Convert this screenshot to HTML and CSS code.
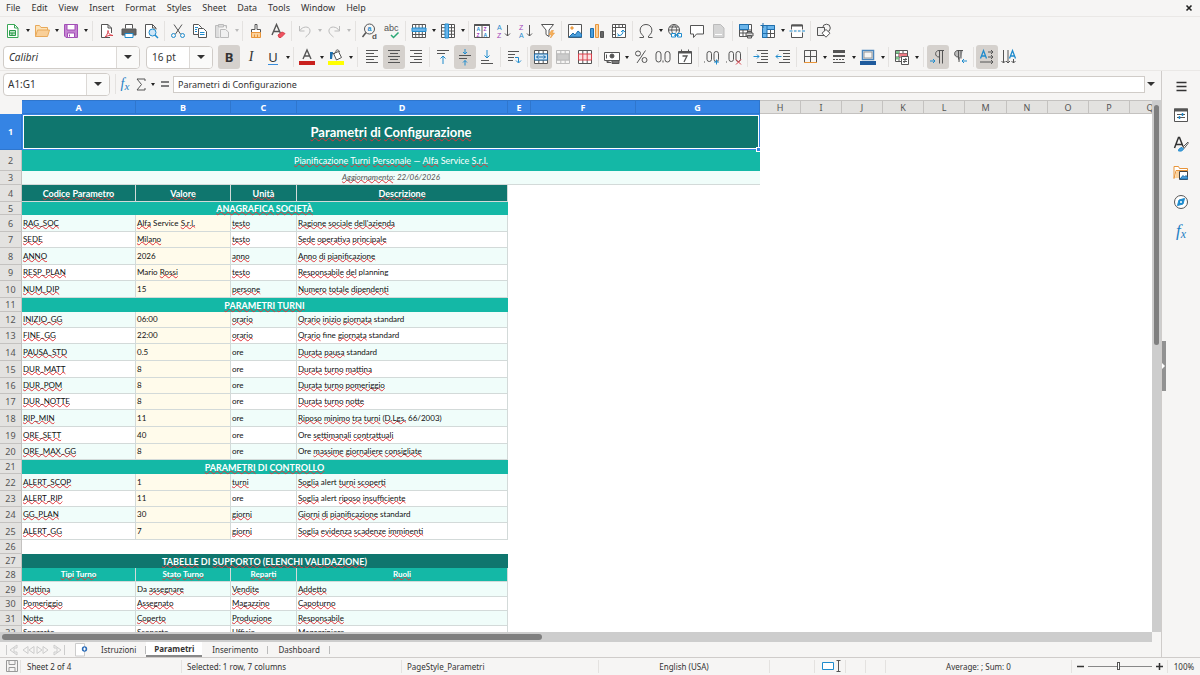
FILE: index.html
```html
<!DOCTYPE html>
<html lang="it">
<head>
<meta charset="utf-8">
<title>Parametri di Configurazione</title>
<link rel="stylesheet" href="styles.css">
</head>
<body>
<nav class="menubar">
<button>File</button><button>Edit</button><button>View</button><button>Insert</button><button>Format</button><button>Styles</button><button>Sheet</button><button>Data</button><button>Tools</button><button>Window</button><button>Help</button>
<button class="close" aria-label="Close document"><svg width="6" height="6" viewBox="0 0 6 6"><path d="M.5.5l5 5M5.500.500l-5 5" stroke="#222" stroke-width="1.600"/></svg></button>
</nav>

<div class="toolbar standard">
<button class="t" aria-label="New"><svg viewBox="0 0 16 16"><path d="M2.500 1.500h7l3.500 3.500v9.500h-10.500z" fill="#fff" stroke="#3aa757"/><path d="M9.500 1.500v3.500h3.500" stroke="#3aa757"/><path d="M4.500 7.500h6v5h-6zM4.500 10h6M7 10v2.500" stroke="#2c9a4b" fill="#bfe5c8"/></svg></button><button class="dd" aria-label="New options"></button>
<button class="t" aria-label="Open"><svg viewBox="0 0 16 16"><path d="M1.500 13.500v-11h4l1.500 2h6.500v3" fill="#fde3b8" stroke="#e8a95a"/><path d="M1.500 13.500l2-6.500h12l-2 6.500z" fill="#f9cf98" stroke="#e8a95a"/></svg></button><button class="dd" aria-label="Open options"></button>
<button class="t" aria-label="Save"><svg viewBox="0 0 16 16"><path d="M1.500 1.500h13v13h-11.500l-1.500-1.500z" fill="#c583d2" stroke="#a24fb6"/><path d="M4 1.500h8v5.500h-8zM4.500 10h7v4.500h-7z" fill="#fff" stroke="#a24fb6"/><path d="M6.500 11.500v2" stroke="#9a3fb0"/></svg></button><button class="dd" aria-label="Save options"></button>
<span class="sep wide"></span>
<button class="t" aria-label="Export as PDF"><svg viewBox="0 0 16 16"><path d="M11 14.500h-8.500v-13h6.500l3.500 3.500v5M9 1.500v3.500h3.500" fill="#fff"/><path d="M6 14c2-2 3-4 3-6.500 0 3 2 5 5 5-3-.5-5 0-8 1.500z" stroke="#d9404c"/></svg></button>
<button class="t" aria-label="Print"><svg viewBox="0 0 16 16"><path d="M4.500 5.500v-4h7v4" fill="#fff"/><path d="M1 6h14v6h-14z" fill="#666"/><path d="M4 10.500h8v4h-8z" fill="#fff" stroke="#1e8bcd"/></svg></button>
<button class="t" aria-label="Print preview"><svg viewBox="0 0 16 16"><path d="M7 14.500h-4.500v-13h7l3.500 3.500v1.500M9.500 1.500v3.500h3.500" fill="#fff"/><circle cx="9.500" cy="9.500" r="3.500" fill="#cfe6f7" stroke="#1e8bcd"/><path d="M12 12l3 3" stroke="#1e8bcd" stroke-width="1.500"/></svg></button>
<span class="sep"></span>
<button class="t" aria-label="Cut"><svg viewBox="0 0 16 16"><path d="M4 1.500l6.500 9.500M12 1.500l-6.500 9.500"/><circle cx="3.500" cy="12.500" r="2" stroke="#1e8bcd"/><circle cx="12.500" cy="12.500" r="2" stroke="#1e8bcd"/></svg></button>
<button class="t" aria-label="Copy"><svg viewBox="0 0 16 16"><path d="M1.500 1.500h5l3 3v7h-8z" fill="#fff"/><path d="M6.500 5.500h5l3 3v6h-8z" fill="#fff"/><path d="M3 4.500h3M3 6.500h2M3 8.500h2M8 9.500h4.500M8 11.500h4.500" stroke="#1e8bcd"/></svg></button>
<button class="t off" aria-label="Paste"><svg viewBox="0 0 16 16"><path d="M5 2.500h-3.500v12h4M10 2.500h2.500v3M4.500 1.500h5v2.500h-5z" fill="#ddd"/><path d="M6.500 6.500h5l3 2.500v5.500h-8z" fill="#f0f0f0"/></svg></button><button class="dd off" aria-label="Paste options"></button>
<span class="sep"></span>
<button class="t" aria-label="Clone formatting"><svg viewBox="0 0 16 16"><path d="M7 1.500h2v5h3.500v3h-9v-3h3.500z" fill="#fff"/><path d="M3.500 9.500h9v5h-9z" fill="#fbd19b" stroke="#e8953a"/><path d="M6.500 11.500v3M9.500 11.500v3" stroke="#e8953a"/></svg></button>
<button class="t" aria-label="Clear formatting"><svg viewBox="0 0 16 16"><path d="M2 12l4.500-10.500 4 9M3.500 8.500h6" stroke-width="1.400"/><path d="M8 12l4-3 3 1.500-4 4h-2z" fill="#ef5360" stroke="#d9404c"/></svg></button>
<span class="sep"></span>
<button class="t off" aria-label="Undo"><svg viewBox="0 0 16 16"><path d="M2.500 3v5h5M3 7.500c2-4 9-5 10-.5.500 3-2 5-4.500 7"/></svg></button><button class="dd off" aria-label="Undo list"></button>
<button class="t off" aria-label="Redo"><svg viewBox="0 0 16 16"><path d="M13.500 3v5h-5M13 7.500c-2-4-9-5-10-.5-.5 3 2 5 4.500 7"/></svg></button><button class="dd off" aria-label="Redo list"></button>
<span class="sep wide"></span>
<button class="t" aria-label="Find and replace"><svg viewBox="0 0 16 16"><circle cx="7.500" cy="6" r="5"/><path d="M4 9.500l-3.500 4.500" stroke-width="1.500"/><text class="blue" x="5.500" y="7.500" font-size="7" font-weight="bold">a</text><text x="10" y="15.500" font-size="8" font-weight="bold">d</text></svg></button>
<button class="t" aria-label="Spelling"><svg viewBox="0 0 16 16"><text x="0" y="8" font-size="9">abc</text><path d="M7 12l2.500 2.500 5-5" stroke="#2aa876" stroke-width="1.500"/></svg></button>
<span class="sep"></span>
<button class="t" aria-label="Row"><svg viewBox="0 0 16 16"><path d="M1.500 1.500h13v13h-13zM1.500 11.500h13M4.700 1.500v13M8 1.500v13M11.300 1.500v13" fill="#fff"/><path d="M1 5h14v3.500h-14z" fill="#69b4ea" stroke="#1e8bcd"/></svg></button><button class="dd" aria-label="Row options"></button>
<button class="t" aria-label="Column"><svg viewBox="0 0 16 16"><path d="M1.500 1.500h13v13h-13zM1.500 4.700h13M1.500 8h13M1.500 11.300h13M11.500 1.500v13" fill="#fff"/><path d="M5 1v14h3.500v-14z" fill="#69b4ea" stroke="#1e8bcd"/></svg></button><button class="dd" aria-label="Column options"></button>
<span class="sep"></span>
<button class="t" aria-label="Sort"><svg viewBox="0 0 16 16"><path d="M.5 1.500h15v13h-15zM8 3v11.500" fill="#fff"/><path d="M.5 2h15" stroke-width="2"/><g font-size="5" font-weight="bold"><text class="blue" x="2.500" y="8">A</text><text class="violet" x="2.500" y="14">Z</text><text class="violet" x="9.500" y="8">Z</text><text class="blue" x="9.500" y="14">A</text></g></svg></button>
<button class="t" aria-label="Sort ascending"><svg viewBox="0 0 16 16"><text class="blue" x="1" y="6.500" font-size="7">A</text><text class="violet" x="1" y="15" font-size="7">Z</text><path d="M11.500 2v11M9 10.500l2.500 2.500 2.500-2.500"/></svg></button>
<button class="t" aria-label="Sort descending"><svg viewBox="0 0 16 16"><text class="violet" x="1" y="6.500" font-size="7">Z</text><text class="blue" x="1" y="15" font-size="7">A</text><path d="M11.500 2v11M9 10.500l2.500 2.500 2.500-2.500"/></svg></button>
<button class="t" aria-label="AutoFilter"><svg viewBox="0 0 16 16"><path d="M1.500 1.500h12l-4.500 5.500v6.500l-3-2v-4.500z" fill="#fff"/><path d="M11.500 7.500l-2.500 4h2.500l-1 3.500 4-5h-2.500l1.500-2.500z" fill="#f7b25c" stroke="#e8953a" stroke-width=".600"/></svg></button>
<span class="sep"></span>
<button class="t" aria-label="Insert image"><svg viewBox="0 0 16 16"><path d="M1.500 1.500h13v13h-13z" fill="#fff"/><circle cx="5" cy="5" r="1.200" fill="#f7b25c" stroke="#e8953a"/><path d="M2 14l4-4 2 2 3-4 3.500 3v3z" fill="#4b9fdc" stroke="#1e6fae"/></svg></button>
<button class="t" aria-label="Insert chart"><svg viewBox="0 0 16 16"><path d="M1.500 5.500h3v9h-3z" fill="#4b9fdc" stroke="#1e6fae"/><path d="M6.500 1.500h3v13h-3z" fill="#fbd19b" stroke="#e8953a"/><path d="M11.500 8.500h3v6h-3z" fill="#666"/></svg></button>
<button class="t" aria-label="Insert pivot table"><svg viewBox="0 0 16 16"><path d="M1.500 1.500h13v13h-13zM1.500 4.500h13M4.500 1.500v13M8 1.500v3M11.500 1.500v3M1.500 8h3M1.500 11.500h3" fill="#fff"/><path d="M6.500 10.500l1.500 2c3 0 4-2 4-5M6.500 13l1.500-.5M10 9l2-2 2 2" stroke="#1e8bcd"/></svg></button>
<span class="sep"></span>
<button class="t" aria-label="Special character"><svg viewBox="0 0 16 16"><path d="M1.500 14.500h4v-1.500c-5.500-3.500-4-11.500 2.500-11.500s8 8 2.500 11.500v1.500h4"/></svg></button><button class="dd" aria-label="Recent characters"></button>
<button class="t" aria-label="Insert hyperlink"><svg viewBox="0 0 16 16"><circle cx="7" cy="7" r="5.500"/><path d="M1.500 7h11M2.500 4h9M7 1.500c-3 3-3 8 0 11M7 1.500c3 3 3 5 2 8"/><path d="M4.500 10.500h4v3.500h-4zM10.500 10.500h4v3.500h-4zM7 12.200h5" fill="#fff" stroke="#1e8bcd"/></svg></button>
<button class="t" aria-label="Insert comment"><svg viewBox="0 0 16 16"><path d="M1.500 2.500h13v8.500h-7l-3 3.500v-3.500h-3z" fill="#fff"/></svg></button>
<button class="t off" aria-label="Headers and footers"><svg viewBox="0 0 16 16"><path d="M2.500 1.500h7l3.500 3.500v9.500h-10.500z" fill="#d5d5d5"/><path d="M4 11.500h7" stroke="#fff"/></svg></button>
<span class="sep"></span>
<button class="t" aria-label="Define print area"><svg viewBox="0 0 16 16"><path d="M1.500 1.500h12v12h-12zM1.500 7h12M1.500 10h12M5 1.500v12M9.500 1.500v12" fill="#fff"/><path d="M1.500 1.500h9v5h-9z" fill="#69b4ea" stroke="#1e6fae"/><path d="M8 10h7v3h-7zM10 8.500h3M9.500 12.500h4v2.500h-4z" fill="#ddd"/></svg></button>
<button class="t" aria-label="Freeze rows and columns"><svg viewBox="0 0 16 16"><path d="M2.500 2.500h12v12h-12zM2.500 10.500h12M10.500 2.500v12" fill="#fff"/><path d="M3 2.500h11.500v4h-7.500v8h-4.500v-9" fill="#69b4ea" stroke="#1e6fae"/><path d="M7 2.500v4M2.500 10.500h4.500M3 0v5M.5 2.500h5" stroke="#1e6fae"/></svg></button><button class="dd" aria-label="Freeze options"></button>
<button class="t" aria-label="Split window"><svg viewBox="0 0 16 16"><path d="M2.500 6.500v-4.500h11v4.500M2.500 9.500v5h11v-5" fill="#fff"/><path d="M2.500 2.500h11" stroke-width="2"/><path d="M.5 8h3M5 8h2.500M9 8h2.500M13 8h3" stroke="#1e8bcd"/></svg></button>
<span class="sep"></span>
<button class="t" aria-label="Show draw functions"><svg viewBox="0 0 16 16"><circle cx="10.500" cy="5" r="3.800"/><path d="M1.500 4.500h7v8h-7z" fill="#f0f0f0"/><path d="M10 6.500l4 3.700-4 4-4-4z" fill="#fff"/></svg></button>
</div>

<div class="toolbar formatting">
<div class="combo font"><input class="italic" aria-label="Font name" value="Calibri"><button aria-label="Font list"></button></div>
<div class="combo size"><input aria-label="Font size" value="16 pt"><button aria-label="Size list"></button></div>
<button class="t on bold" aria-label="Bold">B</button>
<button class="t serif" aria-label="Italic">I</button>
<button class="t" aria-label="Underline"><span class="uline">U</span></button><button class="dd" aria-label="Underline options"></button>
<span class="sep"></span>
<button class="t" aria-label="Font color"><svg viewBox="0 0 16 16"><path d="M4 10l4-9 4 9M5.500 7h5" stroke-width="1.400"/><path d="M0 12h16v4h-16z" fill="#c9211e" stroke="none"/></svg></button><button class="dd" aria-label="Font colors"></button>
<button class="t" aria-label="Background color"><svg viewBox="0 0 16 16"><path d="M5.500 4.500l5-2 3 6-5 2.500z" fill="#fff"/><path d="M8 4c-1-4 3-4 3.500-1M3 4.500h4" /><path d="M2 3h3l-1 7h-2z" fill="#1e6fae" stroke="none"/><path d="M0 12h16v4h-16z" fill="#ff0" stroke="none"/></svg></button><button class="dd" aria-label="Background colors"></button>
<span class="sep wide"></span>
<button class="t" aria-label="Align left"><svg viewBox="0 0 16 16"><path d="M2 1.500h12M2 4.500h8M2 7.500h12M2 10.500h8M2 13.500h12"/></svg></button>
<button class="t on" aria-label="Align center"><svg viewBox="0 0 16 16"><path d="M2 1.500h12M4 4.500h8M2 7.500h12M4 10.500h8M2 13.500h12"/></svg></button>
<button class="t" aria-label="Align right"><svg viewBox="0 0 16 16"><path d="M2 1.500h12M6 4.500h8M2 7.500h12M6 10.500h8M2 13.500h12"/></svg></button>
<span class="sep"></span>
<button class="t" aria-label="Align top"><svg viewBox="0 0 16 16"><path d="M2 1.500h12M2 4.500h8"/><path d="M8 15v-8M5.500 9.500l2.500-2.500 2.500 2.500" stroke="#1e8bcd"/></svg></button>
<button class="t on" aria-label="Center vertically"><svg viewBox="0 0 16 16"><path d="M2 6.500h12M2 9.500h8"/><path d="M8 0v5M6 3l2 2 2-2M8 16.500v-5M6 13.500l2-2 2 2" stroke="#1e8bcd"/></svg></button>
<button class="t" aria-label="Align bottom"><svg viewBox="0 0 16 16"><path d="M2 11.500h8M2 14.500h12"/><path d="M8 1v8M5.500 6.500l2.500 2.500 2.500-2.500" stroke="#1e8bcd"/></svg></button>
<span class="sep"></span>
<button class="t" aria-label="Wrap text"><svg viewBox="0 0 16 16"><path d="M2 2.500h11M2 5.500h7M2 8.500h6M2 11.500h5"/><path d="M9 8.500h3.500v5M10 11.500l2.500 2.500 2.500-2.500" stroke="#1e8bcd"/></svg></button>
<span class="sep"></span>
<button class="t on" aria-label="Merge and center"><svg viewBox="0 0 16 16"><path d="M1.500 1.500h13v13h-13zM1.500 5h13M1.500 11h13M5.800 1.500v3.500M10.200 1.500v3.500M5.800 11v3.500M10.200 11v3.500" fill="#fff"/><path d="M1.500 5h13v6h-13zM3.500 8h9M5.500 6.500l-2 1.500 2 1.500M10.500 6.500l2 1.500-2 1.500" fill="#cfe6f7" stroke="#1e6fae"/></svg></button>
<button class="t off" aria-label="Merge cells"><svg viewBox="0 0 16 16"><path d="M1.500 1.500h13v13h-13zM1.500 5h13M1.500 11h13M5.800 1.500v3.500M10.200 1.500v3.500M5.800 11v3.500M10.200 11v3.500"/><path d="M2 5h12v6h-12z" fill="#ccc"/></svg></button>
<button class="t" aria-label="Unmerge cells"><svg viewBox="0 0 16 16"><path d="M1.500 1.500h13v13h-13zM5.800 1.500v13M10.200 1.500v13" fill="#fff"/><path d="M1.500 5h13v6h-13zM5.800 5v6M10.200 5v6" fill="#fbe0e2" stroke="#d9404c"/></svg></button>
<span class="sep"></span>
<button class="t" aria-label="Format as currency"><svg viewBox="0 0 16 16"><path d="M.5 3.500h15v8h-15z" fill="#fff"/><circle cx="8" cy="7" r="2" fill="#555"/><path d="M2.500 5.500v4M8 11.500h7v3h-7zM3 11.500v2h4" fill="#777"/></svg></button><button class="dd" aria-label="Currency list"></button>
<button class="t" aria-label="Format as percent"><svg viewBox="0 0 16 16"><circle cx="5" cy="4.500" r="2.500"/><circle cx="11.500" cy="11" r="2.500"/><path d="M12.500 1.500l-8.500 12.500"/></svg></button>
<button class="t" aria-label="Format as number"><svg viewBox="0 0 16 16"><rect x="1" y="2.500" width="5" height="10.500" rx="2.500"/><rect x="10" y="2.500" width="5" height="10.500" rx="2.500"/><path d="M8 11.500v2"/></svg></button>
<button class="t" aria-label="Format as date"><svg viewBox="0 0 16 16"><path d="M1.500 2.500h13v12h-13zM4.500.500v3M11.500.500v3" fill="#fff"/><path d="M1.500 3.500h13" stroke-width="2"/><path d="M5.500 7h4.500l-3 6" stroke-width="1.300"/></svg></button>
<span class="sep"></span>
<button class="t" aria-label="Add decimal place"><svg viewBox="0 0 16 16"><path d="M.5 12.500v1"/><rect x="3" y="2.500" width="4.500" height="10" rx="2.200"/><rect x="10" y="2.500" width="4.500" height="10" rx="2.200"/><path d="M12.500 10.500v5M10 13h5" stroke="#1e8bcd"/></svg></button>
<button class="t" aria-label="Delete decimal place"><svg viewBox="0 0 16 16"><path d="M.5 12.500v1"/><rect x="3" y="2.500" width="4.500" height="10" rx="2.200"/><rect x="10" y="2.500" width="4.500" height="10" rx="2.200"/><path d="M10 10.500l5 5M15 10.500l-5 5" stroke="#d9404c"/></svg></button>
<span class="sep"></span>
<button class="t" aria-label="Increase indent"><svg viewBox="0 0 16 16"><path d="M4 1.500h11M8 4.500h7M8 7.500h7M8 10.500h7M4 13.500h11"/><path d="M.5 7.500h5.500M4 5.500l2 2-2 2" stroke="#1e8bcd"/></svg></button>
<button class="t" aria-label="Decrease indent"><svg viewBox="0 0 16 16"><path d="M4 1.500h11M8 4.500h7M8 7.500h7M8 10.500h7M4 13.500h11"/><path d="M1 7.500h5.500M3 5.500l-2 2 2 2" stroke="#1e8bcd"/></svg></button>
<span class="sep"></span>
<button class="t" aria-label="Borders"><svg viewBox="0 0 16 16"><path d="M2.500 1.500v12M14.500 1.500v12M2.500 1.500h12M8.500 1.500v12M2.500 7.500h12" fill="#fff"/><path d="M2 13.500h13" stroke="#e8953a"/></svg></button><button class="dd" aria-label="Border list"></button>
<button class="t" aria-label="Border style"><svg viewBox="0 0 16 16"><path d="M2 2.500h12" stroke-width="3"/><path d="M2 7h12" stroke-width="2"/><path d="M2 10.500h12" stroke-dasharray="2 1"/><path d="M2 13.500h12"/></svg></button><button class="dd" aria-label="Border styles"></button>
<button class="t" aria-label="Border color"><svg viewBox="0 0 16 16"><path d="M2.500 1.500h11v9h-11z" fill="#f6f5f4" stroke="#4b86bd" stroke-width="1.500"/><path d="M4 3h8v6h-8z" stroke="#999"/><path d="M0 12h16v4h-16z" fill="#1e5a9c" stroke="none"/></svg></button><button class="dd" aria-label="Border colors"></button>
<span class="sep"></span>
<button class="t" aria-label="Conditional formatting"><svg viewBox="0 0 16 16"><path d="M1.500 1.500h12v11h-12zM1.500 4.500h12M1.500 8h12M5 1.500v11M9 1.500v11" fill="#fff"/><path d="M2 2h3v2.500h-3zM2 8h3v2.500h-3z" fill="#7cc48c" stroke="none"/><path d="M5 4.500h8v3h-8z" fill="#ef7b85" stroke="none"/><path d="M7.500 7.500h7v8h-7zM9 10.500h4M9 12.500h4M12 9l-2 5" fill="#fff"/></svg></button><button class="dd" aria-label="Conditional list"></button>
<span class="sep wide"></span>
<button class="t on" aria-label="Left to right"><svg viewBox="0 0 16 16"><path d="M14 1.500h-5c-4.500 0-4.500 6.500 0 6.500M9.500 1.500v13M12.500 1.500v13"/><path d="M0 12h5M3 10l2 2-2 2" stroke="#1e8bcd"/></svg></button>
<button class="t" aria-label="Right to left"><svg viewBox="0 0 16 16"><path d="M11 1.500h-5c-4.500 0-4.500 6.500 0 6.500h1v5M6.500 1.500v9M9 1.500v8" fill="#bbb"/><path d="M15 12h-5M12 10l-2 2 2 2" stroke="#1e8bcd"/></svg></button>
<span class="sep"></span>
<button class="t on" aria-label="Text direction left to right"><svg viewBox="0 0 16 16"><path d="M1.500 9.500l3-8 3 8M2.500 7h4" stroke="#1e8bcd" stroke-width="1.300"/><path d="M9 3h5M12 1l2 2-2 2M9 8h5M12 6l2 2-2 2M1 13h13M12 11l2 2-2 2"/></svg></button>
<button class="t" aria-label="Text direction top to bottom"><svg viewBox="0 0 16 16"><path d="M8.500 9.500l3-8 3 8M9.500 7h4" stroke="#1e8bcd" stroke-width="1.300"/><path d="M2.500 1v13M.5 12l2 2 2-2M7 1v13M5 12l2 2 2-2M12.500 10v4M10.500 12l2 2 2-2"/></svg></button>
</div>

<div class="main">
<div class="work">
<div class="formulabar">
<div class="combo name"><input aria-label="Name box" value="A1:G1"><button aria-label="Named ranges"></button></div>
<span class="sep"></span>
<button class="fx" aria-label="Function wizard">f<sub>x</sub></button>
<button class="sigma" aria-label="Select function"><svg width="10" height="13" viewBox="0 0 10 13"><path d="M9 3v-2H1l4.500 5.500L1 12h8v-2" stroke="#555"/></svg></button><button class="dd" aria-label="Function list"></button>
<button class="equals" aria-label="Formula"><svg width="8" height="6" viewBox="0 0 8 6"><path d="M0 1h8M0 5h8" stroke="#555" stroke-width="1.600"/></svg></button>
<input class="formula" aria-label="Input line" value="Parametri di Configurazione">
<button class="expand" aria-label="Expand formula bar"></button>
</div>
<div class="sheetwrap">
<div class="sheet">
<table>
<colgroup><col class="c0"><col class="cA"><col class="cB"><col class="cC"><col class="cD"><col class="cE"><col class="cF"><col class="cG"><col class="cs"><col class="cs"><col class="cs"><col class="cs"><col class="cs"><col class="cw"><col class="cs"><col class="cs"><col class="cs"><col class="cs"></colgroup>
<thead><tr class="h14"><th class="corner"></th><th class="sel">A</th><th class="sel">B</th><th class="sel">C</th><th class="sel">D</th><th class="sel">E</th><th class="sel">F</th><th class="sel">G</th><th>H</th><th>I</th><th>J</th><th>K</th><th>L</th><th>M</th><th>N</th><th>O</th><th>P</th><th>Q</th></tr></thead>
<tbody>
<tr class="h36"><th class="sel">1</th><td class="title" colspan="7"><i>Parametri</i> <i>di</i> <i>Configurazione</i><span class="handle"></span></td></tr>
<tr class="h21"><th>2</th><td class="subtitle" colspan="7"><i>Pianificazione</i> <i>Turni</i> <i>Personale</i> — <i>Alfa</i> Service <i>S.r.l.</i></td></tr>
<tr class="h14"><th>3</th><td class="updated" colspan="7"><i>Aggiornamento</i>: 22/06/2026</td></tr>
<tr class="h17 head"><th>4</th><td><i>Codice</i> <i>Parametro</i></td><td><i>Valore</i></td><td><i>Unità</i></td><td><i>Descrizione</i></td></tr>
<tr class="h13 band"><th>5</th><td colspan="4"><i>ANAGRAFICA</i> <i>SOCIETÀ</i></td></tr>
<tr class="h17 p tint"><th>6</th><td><i>RAG_SOC</i></td><td><i>Alfa</i> Service <i>S.r.l.</i></td><td><i>testo</i></td><td><i>Ragione</i> <i>sociale</i> <i>dell'azienda</i></td></tr>
<tr class="h16 p"><th>7</th><td><i>SEDE</i></td><td><i>Milano</i></td><td><i>testo</i></td><td><i>Sede</i> <i>operativa</i> <i>principale</i></td></tr>
<tr class="h17 p tint"><th>8</th><td><i>ANNO</i></td><td>2026</td><td><i>anno</i></td><td><i>Anno</i> <i>di</i> <i>pianificazione</i></td></tr>
<tr class="h16 p"><th>9</th><td><i>RESP_PLAN</i></td><td>Mario <i>Rossi</i></td><td><i>testo</i></td><td><i>Responsabile</i> <i>del</i> planning</td></tr>
<tr class="h17 p tint"><th>10</th><td><i>NUM_DIP</i></td><td>15</td><td><i>persone</i></td><td><i>Numero</i> <i>totale</i> <i>dipendenti</i></td></tr>
<tr class="h14 band"><th>11</th><td colspan="4"><i>PARAMETRI</i> <i>TURNI</i></td></tr>
<tr class="h16 p tint"><th>12</th><td><i>INIZIO_GG</i></td><td>06:00</td><td><i>orario</i></td><td><i>Orario</i> <i>inizio</i> <i>giornata</i> standard</td></tr>
<tr class="h16 p"><th>13</th><td><i>FINE_GG</i></td><td>22:00</td><td><i>orario</i></td><td><i>Orario</i> fine <i>giornata</i> standard</td></tr>
<tr class="h17 p tint"><th>14</th><td><i>PAUSA_STD</i></td><td>0.5</td><td>ore</td><td><i>Durata</i> <i>pausa</i> standard</td></tr>
<tr class="h17 p"><th>15</th><td><i>DUR_MATT</i></td><td>8</td><td>ore</td><td><i>Durata</i> <i>turno</i> <i>mattina</i></td></tr>
<tr class="h16 p tint"><th>16</th><td><i>DUR_POM</i></td><td>8</td><td>ore</td><td><i>Durata</i> <i>turno</i> <i>pomeriggio</i></td></tr>
<tr class="h16 p"><th>17</th><td><i>DUR_NOTTE</i></td><td>8</td><td>ore</td><td><i>Durata</i> <i>turno</i> <i>notte</i></td></tr>
<tr class="h17 p tint"><th>18</th><td><i>RIP_MIN</i></td><td>11</td><td>ore</td><td><i>Riposo</i> <i>minimo</i> <i>tra</i> <i>turni</i> (<i>D.Lgs.</i> 66/2003)</td></tr>
<tr class="h17 p"><th>19</th><td><i>ORE_SETT</i></td><td>40</td><td>ore</td><td>Ore <i>settimanali</i> <i>contrattuali</i></td></tr>
<tr class="h16 p tint"><th>20</th><td><i>ORE_MAX_GG</i></td><td>8</td><td>ore</td><td>Ore <i>massime</i> <i>giornaliere</i> <i>consigliate</i></td></tr>
<tr class="h14 band"><th>21</th><td colspan="4"><i>PARAMETRI</i> DI <i>CONTROLLO</i></td></tr>
<tr class="h17 p tint"><th>22</th><td><i>ALERT_SCOP</i></td><td>1</td><td><i>turni</i></td><td><i>Soglia</i> alert <i>turni</i> <i>scoperti</i></td></tr>
<tr class="h16 p"><th>23</th><td><i>ALERT_RIP</i></td><td>11</td><td>ore</td><td><i>Soglia</i> alert <i>riposo</i> <i>insufficiente</i></td></tr>
<tr class="h16 p tint"><th>24</th><td><i>GG_PLAN</i></td><td>30</td><td><i>giorni</i></td><td><i>Giorni</i> <i>di</i> <i>pianificazione</i> standard</td></tr>
<tr class="h17 p"><th>25</th><td><i>ALERT_GG</i></td><td>7</td><td><i>giorni</i></td><td><i>Soglia</i> <i>evidenza</i> <i>scadenze</i> <i>imminenti</i></td></tr>
<tr class="h14"><th>26</th></tr>
<tr class="h14 band dark"><th>27</th><td colspan="4"><i>TABELLE</i> DI <i>SUPPORTO</i> (<i>ELENCHI</i> <i>VALIDAZIONE</i>)</td></tr>
<tr class="h14 head light"><th>28</th><td><i>Tipi</i> <i>Turno</i></td><td><i>Stato</i> <i>Turno</i></td><td><i>Reparti</i></td><td><i>Ruoli</i></td></tr>
<tr class="h15 tint"><th>29</th><td><i>Mattina</i></td><td>Da <i>assegnare</i></td><td><i>Vendite</i></td><td><i>Addetto</i></td></tr>
<tr class="h14"><th>30</th><td><i>Pomeriggio</i></td><td><i>Assegnato</i></td><td><i>Magazzino</i></td><td><i>Capoturno</i></td></tr>
<tr class="h15 tint"><th>31</th><td><i>Notte</i></td><td><i>Coperto</i></td><td><i>Produzione</i></td><td><i>Responsabile</i></td></tr>
<tr class="h14"><th>32</th><td><i>Spezzato</i></td><td><i>Scoperto</i></td><td><i>Ufficio</i></td><td><i>Magazziniere</i></td></tr>
</tbody>
</table>
</div>
<div class="vscroll"><div class="vthumb"></div></div>
</div>
<div class="hscroll"><div class="hthumb"></div></div>
<div class="tabs">
<div class="tabnav">
<button aria-label="First sheet"><svg viewBox="0 0 14 12"><path d="M1.500 1v10M12 1l-7 5 7 5v-3h-3v-4h3z"/></svg></button>
<button aria-label="Previous sheet"><svg viewBox="0 0 14 12"><path d="M7 2.500l-5 3.500 5 3.500zM13 2.500l-5 3.500 5 3.500z"/></svg></button>
<button aria-label="Next sheet"><svg viewBox="0 0 14 12"><path d="M1 2.500l5 3.500-5 3.500zM7 2.500l5 3.500-5 3.500z"/></svg></button>
<button aria-label="Last sheet"><svg viewBox="0 0 14 12"><path d="M12.500 1v10M2 1l7 5-7 5v-3h3v-4h-3z"/></svg></button>
</div>
<button class="addsheet" aria-label="Add sheet"><svg width="14" height="14" viewBox="0 0 14 14"><path d="M1.500.500h9v12.500h-9z" fill="#fff" stroke="#ccc"/><circle cx="10.500" cy="6" r="2.700" fill="#2b6cb8"/><path d="M9 6h3M10.500 4.500v3" stroke="#fff"/></svg></button>
<button class="tab">Istruzioni</button><button class="tab current">Parametri</button><button class="tab">Inserimento</button><button class="tab">Dashboard</button>
</div>
</div>
<aside class="sidebar">
<button class="grip" aria-label="Hide sidebar"></button>
<button class="s" aria-label="Sidebar settings"><svg viewBox="0 0 16 16"><path d="M3.500 4.500h10M3.500 8.500h10M3.500 12.500h10" stroke="#333" stroke-width="1.400"/></svg></button>
<button class="s" aria-label="Properties"><svg viewBox="0 0 16 16"><path d="M1.500 2h13v12.500h-13z" fill="#fff"/><path d="M1 3h14" stroke-width="3"/><path d="M4 7.500h8M4 10.500h8"/><path d="M9.500 6v3M6.500 9v3" stroke="#1e8bcd" stroke-width="1.500"/></svg></button>
<button class="s" aria-label="Styles"><svg viewBox="0 0 16 16"><path d="M1.500 12l4-10.500h1l3.500 9M3 8.500h6" stroke="#333" stroke-width="1.500"/><path d="M15 6l-5 5 1 1.500 4-5z" fill="#fff"/><path d="M5 14.500c1 0 1-3 4-3l1.500 1.500c-1 2.500-4 2.500-5.500 1.500z" fill="#4b9fdc" stroke="#1e8bcd"/></svg></button>
<button class="s" aria-label="Gallery"><svg viewBox="0 0 16 16"><path d="M1 13.500v-12h4.500l1 2h8v3M1 13.500l2-8h12" fill="#fff" stroke="#e8953a"/><path d="M2 13l1.500-7h3v7z" fill="#fbd19b" stroke="none"/><path d="M6.500 6.500h8v8h-8z" fill="#fff" stroke="#444"/><path d="M7 14l3-3.500 1.500 1.500 1.500-1.500 1.500 2v1.500z" fill="#4b9fdc" stroke="#1e6fae"/></svg></button>
<button class="s" aria-label="Navigator"><svg viewBox="0 0 16 16"><circle cx="8" cy="8" r="6.500" fill="#fff"/><path d="M11.500 4.500l-1.500 5.500-5.500 1.500 1.500-5.500z" fill="#1e8bcd" stroke="#1e8bcd"/><circle cx="8" cy="8" r="1" fill="#fff" stroke="none"/></svg></button>
<button class="s fx" aria-label="Functions">f<sub>x</sub></button>
</aside>
</div>

<footer class="status">
<span class="disk"><svg width="12" height="12" viewBox="0 0 12 12"><path d="M.5.500h11v11h-11zM3 .500v4h6v-4M3 11.500v-4h6v4" stroke="#999" fill="none"/></svg></span>
<span class="sheetno">Sheet 2 of 4</span>
<span class="selinfo">Selected: 1 row, 7 columns</span>
<span class="style">PageStyle_Parametri</span>
<span class="lang">English (USA)</span>
<span class="ins"></span>
<span class="mode"><svg width="20" height="12" viewBox="0 0 20 12"><path d="M.5 2.500h11v7h-11z" fill="#fff" stroke="#1e8bcd"/><path d="M14.500.500h4M16.500.500v11M14.500 11.500h4" stroke="#555"/></svg></span>
<span class="mini"></span><span class="mini"></span>
<span class="sum">Average: ; Sum: 0</span>
<span class="zoom"><button aria-label="Zoom out"><svg width="7" height="7" viewBox="0 0 7 7"><path d="M0 3.500h7" stroke="#333" stroke-width="1.500"/></svg></button><input type="range" aria-label="Zoom" min="0" max="100" value="48"><button aria-label="Zoom in"><svg width="7" height="7" viewBox="0 0 7 7"><path d="M0 3.500h7M3.500 0v7" stroke="#333" stroke-width="1.500"/></svg></button></span>
<span class="pct">100%</span>
</footer>
</body>
</html>
```

FILE: styles.css
```css
* { box-sizing: border-box; }
body {
  margin: 0;
  height: 100vh;
  display: flex;
  flex-direction: column;
  overflow: hidden;
  background: #f6f5f4;
  color: #333;
  font: 9px/12px "Noto Sans", "Open Sans", sans-serif;
}
button, input { font: inherit; color: inherit; margin: 0; padding: 0; border: 0; background: none; border-radius: 0; }
svg { display: block; fill: none; stroke: none; overflow: visible; }

/* menu */
.menubar { display: flex; align-items: center; height: 17px; padding: 0 8px 0 6px; gap: 11px; border-bottom: 1px solid #eae8e6; }
.menubar .close { margin-left: auto; }

/* toolbars */
.toolbar { display: flex; align-items: center; height: 27px; flex: none; padding-left: 2px; }
.formatting { padding-left: 3px; border-bottom: 1px solid #eae8e6; }
.t { width: 22px; height: 24px; flex: none; display: flex; align-items: center; justify-content: center; border-radius: 3px; font-size: 14px; }
.t svg { width: 16px; height: 16px; stroke: #555; }
.t text { stroke: none; fill: #555; font-family: "Liberation Sans", sans-serif; }
.t .blue { fill: #1e8bcd; }
.t .violet { fill: #a03fb8; }
.t.on { background: #d5d1cd; }
.t.off svg { stroke: #bbb; }
.t.bold { font-weight: bold; font-size: 13px; }
.t.serif { font: italic 14px "Liberation Serif", serif; }
.uline { border-bottom: 1px solid #3a8ddb; line-height: 14px; font-size: 13px; }
.dd { width: 7px; height: 24px; flex: none; display: flex; align-items: center; justify-content: center; }
.dd::before { content: ""; border: 2px solid transparent; border-top: 3px solid #222; border-bottom: 0; }
.dd.off::before { border-top-color: #bbb; }
.sep { width: 5px; height: 20px; flex: none; background: linear-gradient(#e4e2e0, #e4e2e0) center / 1px 100% no-repeat; }
.sep.wide { width: 7px; }

.combo { display: flex; flex: none; height: 23px; border: 1px solid #d0ccc8; border-radius: 4px; background: #fff; overflow: hidden; font-size: 10px; }
.combo input { flex: 1; min-width: 0; padding-left: 5px; }
.combo button { width: 23px; border-left: 1px solid #dcd9d6; background: #fafaf9; display: flex; align-items: center; justify-content: center; }
.combo button::before, .expand::before { content: ""; border: 4px solid transparent; border-top-color: #333; border-bottom: 0; }
.combo.font { width: 137px; margin-right: 6px; }
.combo.size { width: 67px; margin-right: 5px; }
.combo.name { width: 107px; margin-right: 3px; }
.combo.name input { padding-left: 4px; }
.italic { font-style: italic; }

/* main area */
.main { flex: 1; display: flex; min-height: 0; }
.work { flex: 1; min-width: 0; display: flex; flex-direction: column; }
.formulabar { display: flex; align-items: center; height: 29px; padding: 0 4px 3px 3px; flex: none; }
.fx { font: italic 16px/18px "Liberation Serif", serif; color: #1e7fc4; }
.fx sub { font-size: 12px; line-height: 0; vertical-align: -2px; }
.formulabar .fx { width: 14px; font-size: 14px; }
.formulabar .fx sub { font-size: 11px; }
.sigma { width: 17px; display: flex; justify-content: center; }
.equals { width: 17px; display: flex; justify-content: center; }
.formula { flex: 1; min-width: 0; height: 17px; background: #fff; border: 1px solid #d0ccc8; padding-left: 4px; }
.expand { width: 12px; height: 17px; display: flex; align-items: center; justify-content: center; }

.sheetwrap { flex: 1; min-height: 0; display: flex; }
.sheet { flex: 1; min-width: 0; overflow: hidden; background: #fff; }
table { table-layout: fixed; width: 1171px; border-collapse: separate; border-spacing: 0; color: #111; }
.c0 { width: 22px; }
.cA { width: 114px; }
.cB { width: 95px; }
.cC { width: 66px; }
.cD { width: 211px; }
.cE { width: 23px; }
.cF { width: 105px; }
.cG { width: 124px; }
.cs { width: 41px; }
.cw { width: 42px; }
th { padding: 0; background: #e3e2e0; border-right: 1px solid #c4c2c0; border-bottom: 1px solid #c4c2c0; font: 9px/11px "Noto Sans", sans-serif; color: #555; }
thead th { border-top: 1px solid #c4c2c0; }
th.corner { background: #f6f5f4; border-color: #f6f5f4; }
th.sel { background: #3584e4; border-color: #2f76cd; color: #fff; font-weight: bold; }
td { padding: 0 1px; white-space: nowrap; font: 8px/11px Lato, "Noto Sans", sans-serif; border-right: 1px solid #d3dad9; border-bottom: 1px solid #d3dad9; }
td i { font-style: inherit; text-decoration: underline wavy #e0353b 1px; text-decoration-skip-ink: none; text-underline-offset: -1px; }
.h13 { height: 13px; }
.h14 { height: 14px; }
.h15 { height: 15px; }
.h16 { height: 16px; }
.h17 { height: 17px; }
.h21 { height: 21px; }
.h36 { height: 36px; }
.title { position: relative; background: #0f766e; color: #fff; text-align: center; font-size: 13px; line-height: 16px; font-weight: bold; border: 1px solid #3584e4; box-shadow: inset 0 0 0 1px #fff; }
.title i { text-underline-offset: 0; }
.handle { position: absolute; right: -2px; bottom: -3px; width: 5px; height: 5px; background: #3584e4; border: 1px solid #fff; }
.subtitle { background: #14b8a6; color: #fff; text-align: center; font-size: 9px; border: 0; }
.updated { background: #f0fdfa; color: #555; text-align: center; font-style: italic; border-right: 0; }
.tint td { background: #f0fdfa; }
.p td:nth-child(3) { background: #fffbeb; }
.head td, .band td { text-align: center; font-size: 9px; font-weight: bold; color: #fff; }
.head td { background: #0f766e; }
.head.light td, .band td { background: #14b8a6; }
.head.light td { font-size: 8px; }
.band td { border-bottom: 0; border-right-color: #14b8a6; }
.band.dark td { background: #0f766e; border-right-color: #0f766e; }

.vscroll { width: 9px; flex: none; background: #cdcdcd; padding: 5px 2px; }
.vthumb { height: 46%; border-radius: 3px; background: #7f7f7f; }
.hscroll { height: 10px; flex: none; margin-right: 9px; background: #cdcdcd; padding: 2px; }
.hthumb { width: 47%; height: 6px; border-radius: 3px; background: #7f7f7f; }

.tabs { display: flex; align-items: stretch; height: 15px; flex: none; }
.tabnav { display: flex; align-items: center; width: 62px; margin-left: 5px; }
.tabnav button { flex: 1; }
.tabnav svg { width: 14px; height: 12px; stroke: #ccc; }
.addsheet { margin: 0 3px 0 7px; }
.tab { position: relative; padding: 0 10px; font-size: 8px; }
.tab:not(.current)::after { content: ""; position: absolute; right: 0; top: 4px; height: 8px; border-right: 1px solid #bbb; }
.tab.current { padding: 0 8px; background: #fff; font-weight: bold; border-bottom: 2px solid #888; }

.sidebar { position: relative; width: 39px; flex: none; display: flex; flex-direction: column; align-items: center; border-left: 1px solid #cfccca; }
.s { width: 28px; height: 29px; flex: none; display: flex; align-items: center; justify-content: center; }
.s svg { width: 16px; height: 16px; stroke: #555; }
.s.fx { font-size: 17px; display: block; }
.grip { position: absolute; left: 0; top: 46%; width: 4px; height: 50px; background: #929292; display: flex; align-items: center; }
.grip::before { content: ""; border: 3px solid transparent; border-left-color: #fff; border-right: 0; }

/* status bar */
.status { display: flex; align-items: center; height: 18px; flex: none; border-top: 1px solid #cfccca; font-size: 8px; }
.status > span { height: 13px; line-height: 13px; flex: none; border-right: 1px solid #e4e2e0; white-space: nowrap; }
.status .disk { width: 21px; padding-left: 6px; }
.status .sheetno { width: 161px; padding-left: 6px; }
.status .selinfo { width: 220px; padding-left: 5px; }
.status .style { width: 197px; padding-left: 5px; }
.status .lang { flex: 1; text-align: center; }
.status .ins { width: 45px; }
.status .mode { width: 31px; padding-left: 7px; }
.status .mini { width: 20px; }
.status .sum { width: 186px; text-align: center; }
.status .zoom { width: 96px; display: flex; align-items: center; justify-content: center; gap: 4px; }
.status .pct { width: 32px; text-align: center; border: 0; }
.zoom input { appearance: none; width: 64px; height: 9px; }
.zoom input::-webkit-slider-runnable-track { height: 1px; background: #888; }
.zoom input::-webkit-slider-thumb { appearance: none; width: 3px; height: 8px; margin-top: -4px; background: #fff; border: 1px solid #555; }
```
